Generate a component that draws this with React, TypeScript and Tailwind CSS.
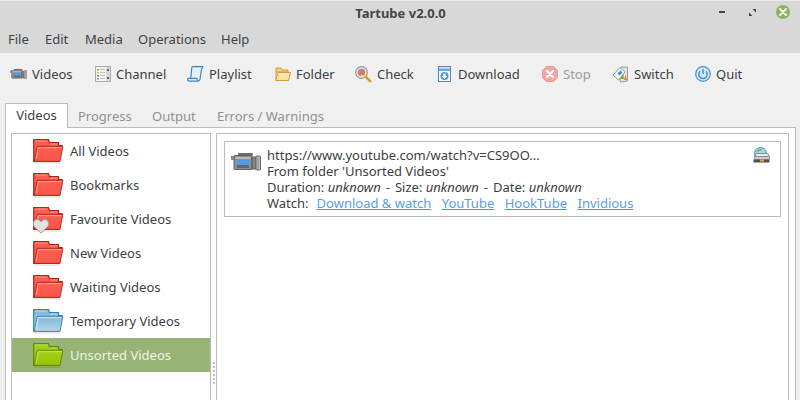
import React from "react";

function FolderIcon({ id, stroke, top, bottom, light }: { id: string; stroke: string; top: string; bottom: string; light: string }) {
  return (
    <svg width="31" height="25" viewBox="0 0 31 25" className="shrink-0">
      <defs>
        <linearGradient id={id} x1="0" y1="0" x2="0" y2="1">
          <stop offset="0" stopColor={top} />
          <stop offset="1" stopColor={bottom} />
        </linearGradient>
      </defs>
      <path d="M1 23.4 H27.5 V24.6 H1Z" fill="#000" opacity="0.14" />
      <path d="M0.7 22.5 V0.7 H15.5 L16.5 3.6 H25.5 V6.5 H29 L26 22.5Z" fill={`url(#${id})`} stroke={stroke} strokeWidth="1.2" />
      <path d="M2 2 H14.5 M17 5 H24.5" stroke={light} strokeWidth="0.9" />
      <path d="M4.2 7.3 H29.9 L27 22.4 H1.2Z" fill={`url(#${id})`} stroke={stroke} strokeWidth="0.9" />
      <path d="M5.2 8.6 H28.6" stroke={light} strokeWidth="1.1" />
      <path d="M5.2 8.6 L3.2 20" fill="none" stroke={light} strokeWidth="1.1" />
    </svg>
  );
}

function Camcorder({ w, h }: { w: number; h: number }) {
  return (
    <svg width={w} height={h} viewBox="0 0 30 18" className="shrink-0">
      <rect x="7" y="0" width="15" height="2.5" rx="1" fill="#6a6e72" />
      <rect x="0.5" y="3.5" width="5" height="3" fill="#96999c" stroke="#5d6164" strokeWidth="0.6" />
      <rect x="3" y="2.5" width="18" height="14" rx="1" fill="#8e9194" stroke="#5a5e62" />
      <rect x="4.5" y="4" width="15" height="2" fill="#b8babc" />
      <rect x="6" y="7" width="12" height="5" fill="#4f9be8" />
      <rect x="6" y="12" width="12" height="3" fill="#63676b" />
      <rect x="21" y="4" width="4" height="12" fill="#808487" stroke="#5a5e62" />
      <rect x="25" y="3" width="4.5" height="14" rx="1" fill="#b8babc" stroke="#66696d" />
      <path d="M27 4v12" stroke="#85888b" strokeWidth="0.8" />
    </svg>
  );
}

function ChannelIcon() {
  return (
    <svg width="16" height="16" viewBox="0 0 16 16" className="shrink-0">
      <rect x="0.5" y="0.5" width="15" height="15" fill="#f6f6ee" stroke="#a6adb2" />
      <rect x="11" y="1" width="4" height="14" fill="#d6d9d8" />
      <path d="M12 3h2v2h-2zM12 11h2v2h-2z" fill="#5a5f64" />
      <path d="M2 3h2v1.5H2z" fill="#8ab84a" />
      <path d="M2 6h2v1.5H2z" fill="#e4b53c" />
      <path d="M2 9h2v1.5H2z" fill="#8b5fd0" />
      <path d="M2 12h2v1.5H2z" fill="#6d8fd8" />
      <path d="M5 3h5v1H5zM5 6h5v1H5zM5 9h5v1H5zM5 12h5v1H5z" fill="#bcbfba" />
    </svg>
  );
}

function PlaylistIcon() {
  return (
    <svg width="17" height="16" viewBox="0 0 17 16" className="shrink-0">
      <path d="M5 0.8 H16 C14.8 1.6 14.6 3 14.4 4 L13 13 C12.8 14.4 12 15 11 15 H2 C0.8 15 0.5 12.6 1.2 12.4 H3.8 L4.7 3 C4.8 1.5 5 0.8 5 0.8Z" fill="#e4f1fa" />
      <path d="M5.5 0.7 H16.2 C14.8 1.4 14.6 3 14.4 4 L13 13 C12.8 14.4 12 15.1 11 15.1 H2 C0.6 15.1 0.4 12.4 1.2 12.4 H9.8 C10 13.6 10.2 14.6 11 15.1 M3.8 12.3 L4.6 3.2 C4.8 1.6 5 0.7 5.5 0.7" fill="none" stroke="#3b87c4" strokeWidth="1.2" />
    </svg>
  );
}

function OpenFolderIcon() {
  return (
    <svg width="16" height="14" viewBox="0 0 16 14" className="shrink-0">
      <path d="M1 13 V1 H6 L7.5 3 H13 V5 H1" fill="#f4cf85" stroke="#d09a3e" />
      <path d="M3 5.5 H15.5 L13.5 13.5 H0.7Z" fill="#fbe39f" stroke="#d09a3e" />
      <path d="M3.5 7 H14" stroke="#fff4c9" />
    </svg>
  );
}

function CheckIcon() {
  return (
    <svg width="17" height="17" viewBox="0 0 17 17" className="shrink-0">
      <circle cx="6.5" cy="6.5" r="5.8" fill="#e6edf3" stroke="#8f979e" strokeWidth="1.2" />
      <circle cx="6.5" cy="6.5" r="3.8" fill="#ef7a3a" />
      <path d="M4 6c1-2 3-2.5 5-2 .5 1-2 1-2 2.5S5 8 4 6z" fill="#5f9fe0" />
      <path d="M6 9h3l-1 1.5H6z" fill="#f7d26b" />
      <path d="M11 11 L15.2 15.2" stroke="#d89a35" strokeWidth="2.6" strokeLinecap="round" />
    </svg>
  );
}

function DownloadIcon() {
  return (
    <svg width="13" height="16" viewBox="0 0 13 16" className="shrink-0">
      <rect x="0.5" y="0.5" width="12" height="15" fill="#f6f8fa" stroke="#5d83ad" />
      <rect x="1" y="1" width="11" height="1.5" fill="#cfe2f4" />
      <rect x="1" y="2.5" width="11" height="2.5" fill="#6caae2" />
      <circle cx="6.5" cy="10" r="4" fill="#4c93d8" />
      <path d="M5.3 7.5h2.4V10h1.6l-2.8 3-2.8-3h1.6z" fill="#fff" />
    </svg>
  );
}

function StopIcon() {
  return (
    <svg width="16" height="16" viewBox="0 0 16 16" className="shrink-0">
      <path d="M4.5 .5h7l4 4v7l-4 4h-7l-4-4v-7z" fill="#f1a7a1" stroke="#e59a94" strokeLinejoin="round" />
      <path d="M5 5l6 6M11 5l-6 6" stroke="#fff" strokeWidth="2.4" strokeLinecap="round" />
    </svg>
  );
}

function SwitchIcon() {
  return (
    <svg width="17" height="17" viewBox="0 0 17 17" className="shrink-0">
      <path d="M9 1h6.5v14l-7 1-1-5z" fill="#e3e3df" stroke="#9c9c96" />
      <path d="M1 9 L8 1.5 L13 6 L6.5 14Z" fill="#f4f4f0" stroke="#93948f" />
      <path d="M5.5 7.5 L8.5 4.5 L10.5 6.5 L7.5 9.5Z" fill="#3c8ed6" />
      <path d="M8 13 L11.5 8 L12 13Z" fill="#7eb336" />
      <path d="M12 14 L13.5 9 L15 14Z" fill="#e07b2a" />
    </svg>
  );
}

function QuitIcon() {
  return (
    <svg width="16" height="16" viewBox="0 0 16 16" className="shrink-0">
      <circle cx="8" cy="8" r="7.3" fill="#d8eaf8" stroke="#3f8fd2" strokeWidth="1.2" />
      <path d="M5.2 5.2a4.2 4.2 0 1 0 5.6 0" fill="none" stroke="#3f8fd2" strokeWidth="1.4" />
      <path d="M8 3v5" stroke="#3f8fd2" strokeWidth="1.5" />
    </svg>
  );
}

function DriveIcon() {
  return (
    <svg width="17" height="16" viewBox="0 0 17 16" className="shrink-0">
      <circle cx="7.5" cy="6.5" r="6" fill="#a8d6ef" stroke="#3f95cd" />
      <path d="M3 5c1-3 4-4 7-3.5L8 4z" fill="#7cc35a" />
      <path d="M3 6.5h12l1 3H2z" fill="#e8e8e6" stroke="#8c8f91" />
      <rect x="1.5" y="9.5" width="15" height="3" fill="#c9cbcc" stroke="#808386" strokeWidth="0.7" />
      <rect x="0.5" y="12.5" width="16" height="3" fill="#4e5257" />
      <rect x="7" y="12.5" width="4" height="2" fill="#eda63a" />
    </svg>
  );
}

const tools = [
  { label: "Videos", icon: <Camcorder w={17} h={12} />, w: "w-[84px]" },
  { label: "Channel", icon: <ChannelIcon />, w: "w-[93px]" },
  { label: "Playlist", icon: <PlaylistIcon />, w: "w-[87px]" },
  { label: "Folder", icon: <OpenFolderIcon />, w: "w-[81px]" },
  { label: "Check", icon: <CheckIcon />, w: "w-[81px]" },
  { label: "Download", icon: <DownloadIcon />, w: "w-[105px]" },
  { label: "Stop", icon: <StopIcon />, w: "w-[71px]", off: true },
  { label: "Switch", icon: <SwitchIcon />, w: "w-[82px]" },
  { label: "Quit", icon: <QuitIcon />, w: "w-[60px]" },
];

const red = { stroke: "#b8221c", top: "#ff5e50", bottom: "#f5574a", light: "#ff9e92" };
const folders = [
  { name: "All Videos", id: "f1", c: red },
  { name: "Bookmarks", id: "f2", c: red },
  { name: "Favourite Videos", id: "f3", c: red, heart: true },
  { name: "New Videos", id: "f4", c: red },
  { name: "Waiting Videos", id: "f5", c: red },
  { name: "Temporary Videos", id: "f6", c: { stroke: "#2a84bd", top: "#7fb6d9", bottom: "#b5d6e8", light: "#d3e7f3" } },
  { name: "Unsorted Videos", id: "f7", c: { stroke: "#5b8a05", top: "#a6cf1b", bottom: "#95c500", light: "#c4e25c" }, selected: true },
];

const links = ["Download & watch", "YouTube", "HookTube", "Invidious"];

export default function App() {
  return (
    <div className="w-[800px] h-[400px] overflow-hidden bg-[#f0f0f0] text-[#3c4043] text-[13px] flex flex-col font-['Noto_Sans',sans-serif]">
      <div className="h-[53px] shrink-0 bg-[#d8d8d8] border-t border-[#ececec] flex flex-col">
        <div className="h-[25px] relative flex items-center justify-center pl-[1px]">
          <span className="font-bold text-[13px] text-[#454545]">Tartube v2.0.0</span>
          <div className="absolute right-[10px] top-[4px] flex items-center">
            <div className="w-[6px] h-[2px] bg-[#444] mr-[24px]" />
            <svg width="7" height="7" viewBox="0 0 7 7" className="mr-[20px]">
              <path d="M3.5 0H7V3.5ZM0 3.5V7H3.5Z" fill="#444" />
            </svg>
            <div className="w-[14px] h-[14px] rounded-full bg-[#8eb35f] flex items-center justify-center">
              <svg width="8" height="8" viewBox="0 0 8 8">
                <path d="M1 1l6 6M7 1l-6 6" stroke="#f4f7ee" strokeWidth="1.8" strokeLinecap="round" />
              </svg>
            </div>
          </div>
        </div>
        <nav className="flex pl-[8px] pt-[4px] text-[#3f4245]">
          <span className="w-[37px]">File</span>
          <span className="w-[40px]">Edit</span>
          <span className="w-[53px]">Media</span>
          <span className="w-[83px]">Operations</span>
          <span>Help</span>
        </nav>
      </div>

      <div className="h-[50px] shrink-0 flex items-center pl-[10px] pb-[8px]">
        {tools.map((t) => (
          <div key={t.label} className={`${t.w} flex items-center gap-[5px] shrink-0`}>
            <span className="w-[17px] flex justify-center">{t.icon}</span>
            <span className={`mt-[2px] ${t.off ? "text-[#9a9d9f]" : "text-[#3c4043]"}`}>{t.label}</span>
          </div>
        ))}
      </div>

      <div className="flex h-[24px] shrink-0 pl-[5px] text-[#8d9196]">
        <div className="w-[63px] h-[25px] z-10 bg-white border border-b-0 border-[#bcbcbc] flex items-center justify-center text-[#3c4043]">Videos</div>
        <span className="ml-[10px] w-[74px] leading-[26px]">Progress</span>
        <span className="w-[65px] leading-[26px]">Output</span>
        <span className="leading-[26px]">Errors / Warnings</span>
      </div>

      <div className="ml-[5px] mr-[4px] h-[300px] shrink-0 bg-white border border-[#bcbcbc] pt-[5px] pl-[5px] pr-[6px] flex">
        <div className="w-[200px] shrink-0 border border-[#bcbcbc] bg-white">
          {folders.map((f) => (
            <div key={f.id} className={`h-[34px] flex items-center relative ${f.selected ? "bg-[#97b375] text-[#eef3e2]" : "text-[#3c4043]"}`}>
              <span className="ml-[21px]">
                <FolderIcon id={f.id} {...f.c} />
              </span>
              <span className="ml-[6px] mt-[2px]">{f.name}</span>
              {f.heart && (
                <svg width="16" height="16" viewBox="0 0 16 16" className="absolute left-[21px] top-[16px]">
                  <path d="M8 15.2 L1.2 8.5 C-0.5 5.8 0.8 1.5 4 1.5 C5.8 1.5 7 2.5 8 4 C9 2.5 10.2 1.5 12 1.5 C15.2 1.5 16.5 5.8 14.8 8.5Z" fill="#e2e2e2" stroke="#a0a0a0" />
                </svg>
              )}
            </div>
          ))}
        </div>
        <div className="w-[5px] shrink-0 flex flex-col items-center gap-[2px] pt-[229px]">
          {[0, 1, 2, 3, 4, 5].map((i) => (
            <div key={i} className="w-[2px] h-[2px] bg-[#c0c0c0]" />
          ))}
        </div>
        <div className="flex-1 border border-[#bcbcbc] bg-white p-[7px]">
          <div className="h-[76px] border border-[#bcbcbc] flex pl-[6px] pr-[10px] pt-[5px] leading-[16px]">
            <span className="mt-[6px] mr-[6px]">
              <Camcorder w={30} h={18} />
            </span>
            <div className="flex-1">
              <div>https://www.youtube.com/watch?v=CS9OO...</div>
              <div>From folder 'Unsorted Videos'</div>
              <div>
                Duration: <i>unknown</i>
                <span className="mx-[5px]">-</span>
                Size: <i>unknown</i>
                <span className="mx-[5px]">-</span>
                Date: <i>unknown</i>
              </div>
              <div className="flex">
                <span className="mr-[8px]">Watch:</span>
                {links.map((l) => (
                  <a key={l} className="mr-[10.5px] text-[#5a9ceb] underline decoration-[#4a90e6]">
                    {l}
                  </a>
                ))}
              </div>
            </div>
            <DriveIcon />
          </div>
        </div>
      </div>
    </div>
  );
}
